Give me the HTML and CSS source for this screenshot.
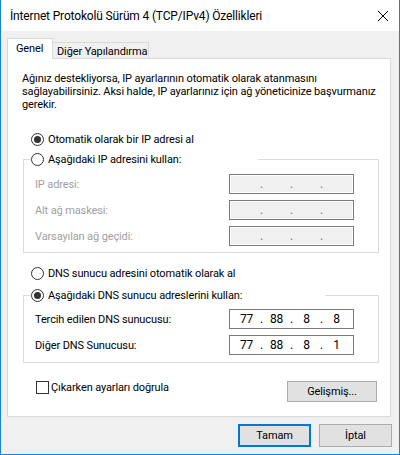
FILE: index.html
```html
<!DOCTYPE html>
<html lang="tr">
<head>
    <meta charset="UTF-8">
    <meta name="viewport" content="width=device-width, initial-scale=1.0">
    <title>İnternet Protokolü Sürüm 4 (TCP/IPv4) Özellikleri</title>
    <link rel="stylesheet" href="styles.css">
</head>
<body>

<div class="window">
    <div class="titlebar">
        <span class="title">İnternet Protokolü Sürüm 4 (TCP/IPv4) Özellikleri</span>
        <svg class="close" width="12" height="12" viewBox="0 0 12 12">
            <path d="M1 1 L11 11 M11 1 L1 11" stroke="#000" stroke-width="1" fill="none"/>
        </svg>
    </div>

    <div class="content">
        <div class="tabs">
            <div class="tab active">Genel</div>
            <div class="tab other">Diğer Yapılandırma</div>
        </div>

        <div class="panel">
            <p class="intro">Ağınız destekliyorsa, IP ayarlarının otomatik olarak atanmasını<br>sağlayabilirsiniz. Aksi halde, IP ayarlarınız için ağ yöneticinize başvurmanız<br>gerekir.</p>

            <div class="option first"><span class="radio on"></span>Otomatik olarak bir IP adresi al</div>

            <fieldset class="group off">
                <legend class="option ip-legend"><span class="radio"></span>Aşağıdaki IP adresini kullan:</legend>
                <div class="row">
                    <span class="label">IP adresi:</span>
                    <div class="ip"><span class="oct"></span><span class="dot">.</span><span class="oct"></span><span class="dot">.</span><span class="oct"></span><span class="dot">.</span><span class="oct"></span></div>
                </div>
                <div class="row">
                    <span class="label">Alt ağ maskesi:</span>
                    <div class="ip"><span class="oct"></span><span class="dot">.</span><span class="oct"></span><span class="dot">.</span><span class="oct"></span><span class="dot">.</span><span class="oct"></span></div>
                </div>
                <div class="row">
                    <span class="label">Varsayılan ağ geçidi:</span>
                    <div class="ip"><span class="oct"></span><span class="dot">.</span><span class="oct"></span><span class="dot">.</span><span class="oct"></span><span class="dot">.</span><span class="oct"></span></div>
                </div>
            </fieldset>

            <div class="option dns-auto"><span class="radio"></span>DNS sunucu adresini otomatik olarak al</div>

            <fieldset class="group dns">
                <legend class="option dns-legend"><span class="radio on"></span>Aşağıdaki DNS sunucu adreslerini kullan:</legend>
                <div class="row">
                    <span class="label">Tercih edilen DNS sunucusu:</span>
                    <div class="ip"><span class="oct">77</span><span class="dot">.</span><span class="oct">88</span><span class="dot">.</span><span class="oct">8</span><span class="dot">.</span><span class="oct">8</span></div>
                </div>
                <div class="row">
                    <span class="label">Diğer DNS Sunucusu:</span>
                    <div class="ip"><span class="oct">77</span><span class="dot">.</span><span class="oct">88</span><span class="dot">.</span><span class="oct">8</span><span class="dot">.</span><span class="oct">1</span></div>
                </div>
            </fieldset>

            <div class="bottom-row">
                <div class="check"><span class="box"></span>Çıkarken ayarları doğrula</div>
                <button class="btn advanced">Gelişmiş...</button>
            </div>
        </div>

        <div class="actions">
            <button class="btn default">Tamam</button>
            <button class="btn">İptal</button>
        </div>
    </div>
</div>

</body>
</html>
```

FILE: styles.css
```css
body {
    margin: 0;
    font-family: Roboto, "Noto Sans", sans-serif;
    font-size: 11px;
    letter-spacing: -0.12px;
    color: #000;
}
.window {
    width: 400px;
    height: 455px;
    box-sizing: border-box;
    border: 1px solid #1883d7;
    border-top: none;
    background: #f0f0f0;
}
.titlebar {
    height: 31px;
    background: #fff;
    display: flex;
    align-items: center;
    justify-content: space-between;
    padding: 0 10px 0 9px;
    font-size: 12px;
    letter-spacing: -0.16px;
}
.close {
    display: block;
}
.content {
    padding: 7px 8px 0 6px;
}
.tabs {
    display: flex;
    align-items: flex-end;
    height: 21px;
    margin-bottom: -1px;
    position: relative;
    z-index: 1;
}
.tab {
    box-sizing: border-box;
    height: 17px;
    border: 1px solid #d9d9d9;
    line-height: 15px;
    background: #f0f0f0;
}
.tab.active {
    height: 21px;
    width: 46px;
    border-bottom: none;
    background: #fff;
    padding: 1px 0 0 8px;
    line-height: 17px;
}
.tab.other {
    width: 97px;
    margin-left: -1px;
    padding: 1px 0 0 4px;
}
.panel {
    box-sizing: border-box;
    width: 384px;
    height: 359px;
    border: 1px solid #d9d9d9;
    background: #fff;
    padding: 13px 0 0 14px;
}
.intro {
    margin: 0;
    line-height: 13px;
    white-space: nowrap;
}
.option {
    display: flex;
    align-items: center;
    height: 20px;
    white-space: nowrap;
}
.option.first {
    margin: 18px 0 0 9px;
}
.radio {
    box-sizing: border-box;
    width: 13px;
    height: 13px;
    border: 1px solid #333;
    border-radius: 50%;
    background: #fff;
    margin-right: 4px;
    display: flex;
    align-items: center;
    justify-content: center;
}
.radio.on::after {
    content: "";
    width: 7px;
    height: 7px;
    border-radius: 50%;
    background: #333;
}
.group {
    box-sizing: border-box;
    width: 356px;
    margin: 0 0 0 1px;
    border: 1px solid #dcdcdc;
    padding: 5px 24px 6px 7px;
    min-inline-size: 0;
}
.group legend {
    padding: 0;
}
.ip-legend {
    width: 227px;
}
.dns-legend {
    width: 294px;
}
.dns-auto {
    margin: 10px 0 0 9px;
}
.group.dns {
    margin-top: 2px;
    padding-top: 4px;
    padding-bottom: 7px;
}
.row {
    display: flex;
    align-items: center;
    justify-content: space-between;
    height: 20px;
    padding-left: 4px;
}
.row + .row {
    margin-top: 6px;
}
.ip {
    box-sizing: border-box;
    width: 125px;
    height: 20px;
    border: 1px solid #7a7a7a;
    background: #fff;
    display: flex;
    justify-content: center;
    align-items: center;
    font-size: 12px;
}
.oct {
    width: 24px;
    text-align: center;
}
.dot {
    width: 6px;
    text-align: center;
}
.off .label {
    color: #a0a0a0;
}
.off .ip {
    background: #f0f0f0;
    box-shadow: inset 0 0 0 1px #fff;
}
.off .dot {
    color: #6d6d8d;
}
.bottom-row {
    display: flex;
    justify-content: space-between;
    align-items: flex-start;
    margin: 18px 13px 0 14px;
}
.check {
    display: flex;
    align-items: center;
    height: 13px;
    white-space: nowrap;
}
.box {
    box-sizing: border-box;
    width: 13px;
    height: 13px;
    border: 1px solid #333;
    background: #fff;
    margin-right: 2px;
}
.btn {
    box-sizing: border-box;
    font-family: inherit;
    font-size: 11px;
    letter-spacing: inherit;
    color: #000;
    background: #e1e1e1;
    border: 1px solid #adadad;
    padding: 0;
    width: 73px;
    height: 23px;
}
.btn.advanced {
    width: 90px;
    height: 21px;
}
.btn.default {
    border: 2px solid #0078d7;
}
.actions {
    display: flex;
    justify-content: flex-end;
    gap: 8px;
    margin: 7px -1px 0 0;
}
```
